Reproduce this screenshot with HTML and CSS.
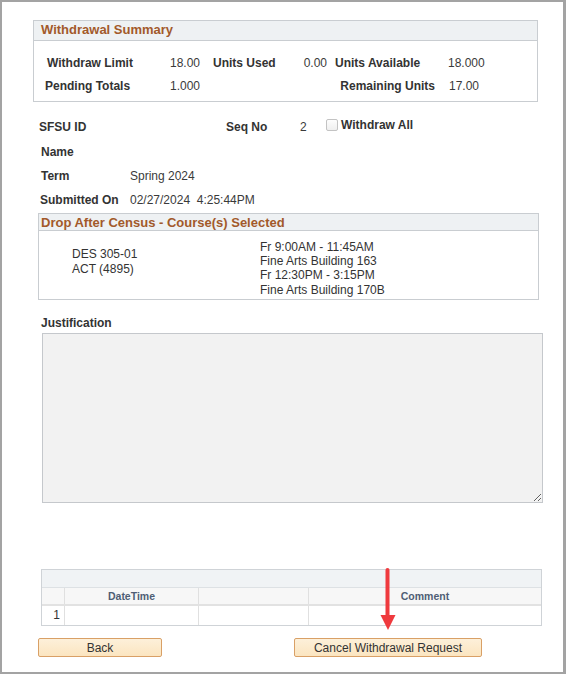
FILE: index.html
```html
<!DOCTYPE html>
<html>
<head>
<meta charset="utf-8">
<link rel="stylesheet" href="styles.css">
</head>
<body>
<div class="frame">
  <section class="box summary">
    <div class="box-head">Withdrawal Summary</div>
    <div class="sum-grid">
      <div class="lbl pad2">Withdraw Limit</div>
      <div class="val">18.00</div>
      <div class="lbl">Units Used</div>
      <div class="val right">0.00</div>
      <div class="lbl padl8">Units Available</div>
      <div class="val padl8">18.000</div>

      <div class="lbl">Pending Totals</div>
      <div class="val">1.000</div>
      <div></div>
      <div></div>
      <div class="lbl right padr5">Remaining Units</div>
      <div class="val padl9">17.00</div>
    </div>
  </section>

  <section class="info">
    <div class="info-row">
      <div class="lbl w-id">SFSU ID</div>
      <div class="lbl w-seq">Seq No</div>
      <div class="val w-num">2</div>
      <div class="check-wrap"><span class="checkbox"></span><span class="lbl">Withdraw All</span></div>
    </div>
    <div class="info-row">
      <div class="lbl w-label pad2">Name</div>
    </div>
    <div class="info-row">
      <div class="lbl w-label pad2">Term</div>
      <div class="val">Spring 2024</div>
    </div>
    <div class="info-row">
      <div class="lbl w-label pad1">Submitted On</div>
      <div class="val">02/27/2024&nbsp; 4:25:44PM</div>
    </div>
  </section>

  <section class="box drop">
    <div class="box-head drop-head">Drop After Census - Course(s) Selected</div>
    <div class="drop-body">
      <div class="course">
        <div>DES 305-01</div>
        <div>ACT (4895)</div>
      </div>
      <div class="sched">
        <div>Fr 9:00AM - 11:45AM</div>
        <div>Fine Arts Building 163</div>
        <div>Fr 12:30PM - 3:15PM</div>
        <div>Fine Arts Building 170B</div>
      </div>
    </div>
  </section>

  <div class="lbl just-label">Justification</div>
  <textarea class="just-area"></textarea>

  <div class="grid">
    <div class="grid-bar"></div>
    <div class="grid-cols">
      <div class="gc"></div>
      <div class="gc sep">DateTime</div>
      <div class="gc sep"></div>
      <div class="gc sep">Comment</div>
    </div>
    <div class="grid-row">
      <div class="gr num">1</div>
      <div class="gr sep"></div>
      <div class="gr sep"></div>
      <div class="gr sep"></div>
    </div>
  </div>

  <div class="buttons">
    <button class="btn btn-back">Back</button>
    <button class="btn btn-cancel">Cancel Withdrawal Request</button>
  </div>

  <svg class="arrow" width="20" height="68" viewBox="0 0 20 68">
    <line x1="9.5" y1="4" x2="9.5" y2="52" stroke="#ef3a3e" stroke-width="4" stroke-linecap="round"/>
    <polygon points="2.5,49 17.5,49 10,64" fill="#ef3a3e"/>
  </svg>
</div>
</body>
</html>
```
FILE: styles.css
```css
* { box-sizing: border-box; }
html, body { margin: 0; padding: 0; background: #fff; }
body {
  font-family: "Liberation Sans", Arial, sans-serif;
  font-size: 12px;
  color: #333;
}
.frame {
  position: relative;
  width: 566px;
  height: 674px;
  border-style: solid;
  border-color: #a3a3a3;
  border-width: 2px 3px 2px 2px;
  overflow: hidden;
}
.lbl { font-weight: bold; color: #333; white-space: nowrap; }
.val { color: #3a3a3a; white-space: nowrap; }
.right { text-align: right; }
.pad1 { padding-left: 1px; }
.pad2 { padding-left: 2px; }
.padl8 { padding-left: 8px; }
.padl9 { padding-left: 9px; }
.padr5 { padding-right: 5px; }

.box {
  border: 1px solid #c9cdd1;
  background: #fff;
}
.box-head {
  background: #eef1f3;
  border-bottom: 1px solid #c9cdd1;
  color: #a2592a;
  font-weight: bold;
  font-size: 13px;
  line-height: 16px;
  height: 20px;
  padding: 1px 0 2px 7px;
}
.summary {
  margin: 18px 0 0 31px;
  width: 505px;
  height: 82px;
}
.sum-grid {
  display: grid;
  grid-template-columns: 125px 43px 62px 52px 113px auto;
  grid-auto-rows: 23px;
  align-items: center;
  padding: 10px 0 4px 11px;
}

.info {
  margin: 13px 0 0 37px;
}
.info-row {
  display: flex;
  align-items: center;
  height: 24px;
  padding-top: 1px;
}
.info-row:first-child { padding-top: 0; }
.w-id { width: 187px; }
.w-seq { width: 74px; }
.w-num { width: 26px; }
.w-label { width: 91px; }
.check-wrap {
  display: flex;
  align-items: center;
  margin-top: -4px;
}
.checkbox {
  display: inline-block;
  width: 12px;
  height: 12px;
  border: 1px solid #c3c3c3;
  border-radius: 2px;
  background: linear-gradient(#fdfdfd, #efefef);
  margin-right: 3px;
}

.drop {
  margin: 2px 0 0 36px;
  width: 501px;
  height: 87px;
}
.drop-head {
  height: 17px;
  padding: 1px 0 0 2px;
}
.drop-body {
  display: flex;
  height: 68px;
}
.course {
  width: 221px;
  padding: 16px 0 0 33px;
  line-height: 15px;
}
.sched {
  padding-top: 8.5px;
  line-height: 14.4px;
}

.just-label {
  margin: 15px 0 0 39px;
  line-height: 16px;
}
.just-area {
  display: block;
  margin: 2px 0 0 40px;
  width: 501px;
  height: 170px;
  background: #f2f2f2;
  border: 1px solid #c5c8cc;
  border-radius: 0;
  padding: 2px;
  resize: both;
  font-family: "Liberation Sans", Arial, sans-serif;
}

.grid {
  margin: 66px 0 0 39px;
  width: 501px;
  border: 1px solid #cfd3d7;
}
.grid-bar {
  height: 18px;
  background: #f0f3f5;
  border-bottom: 1px solid #dde1e4;
}
.grid-cols, .grid-row {
  display: grid;
  grid-template-columns: 22px 134px 110px 1fr;
}
.grid-cols {
  height: 18px;
  background: #f7f7f7;
  border-bottom: 2px solid #e2e2e2;
}
.gc {
  font-weight: bold;
  font-size: 10.5px;
  color: #4f5e75;
  text-align: center;
  line-height: 16px;
}
.grid-row { height: 19px; }
.gr { line-height: 19px; }
.sep { border-left: 1px solid #e0e0e0; }
.num { text-align: right; padding-right: 4px; }

.buttons {
  display: flex;
  margin: 12px 0 0 36px;
}
.btn {
  height: 19px;
  border: 1px solid #d9a066;
  border-radius: 2px;
  background: linear-gradient(#fdf0da, #fbe5c0);
  font-family: "Liberation Sans", Arial, sans-serif;
  font-size: 12px;
  color: #333;
  padding: 1px 0 0;
  line-height: 16px;
}
.btn-back { width: 124px; }
.btn-cancel { width: 188px; margin-left: 132px; }

.arrow {
  position: absolute;
  left: 376px;
  top: 564px;
}
```
